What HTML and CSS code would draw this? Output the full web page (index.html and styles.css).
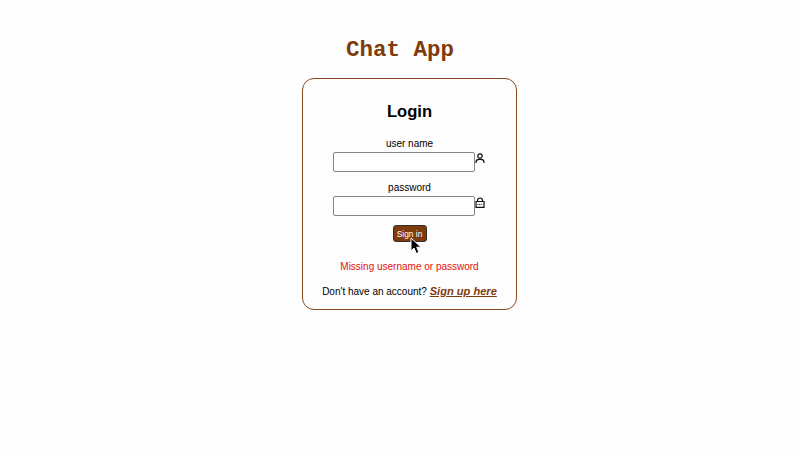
FILE: index.html
```html
<!DOCTYPE html>
<html lang="en">
<head>
<meta charset="utf-8">
<title>Chat App</title>
<link rel="stylesheet" href="styles.css">
</head>
<body>
<h1 class="brand">Chat App</h1>
<main class="card">
  <h2 class="title">Login</h2>
  <form class="form">
    <label class="label" for="user">user name</label>
    <div class="field">
      <input class="input" id="user" type="text">
      <svg class="icon" viewBox="0 0 12 12"><circle cx="6" cy="4" r="2.2"/><path d="M2 11V10.2Q2 7.6 4.8 7.3H7.2Q10 7.6 10 10.2V11"/></svg>
    </div>
    <label class="label" for="pass">password</label>
    <div class="field">
      <input class="input" id="pass" type="password">
      <svg class="icon" viewBox="0 0 12 12"><path d="M2 5.5H10V11.4H2ZM3.5 5.5V4.5Q3.5 2 6 2Q8.5 2 8.5 4.5V5.5"/><path class="dots" d="M3.5 8.4H8.5"/></svg>
    </div>
    <div class="action">
      <button class="button" type="button">Sign in</button>
      <svg class="cursor" viewBox="0 0 12 18"><path d="M1 1V14L4 11L6.4 16.5L9 15.3L6.7 10.2H11Z"/></svg>
    </div>
  </form>
  <p class="error">Missing username or password</p>
  <p class="signup">Don't have an account? <a class="link" href="#">Sign up here</a></p>
</main>
</body>
</html>
```

FILE: styles.css
```css
* { box-sizing: border-box; }
body { margin: 0; background: #fdfdfd; color: #000; font: 10px/12px "Liberation Sans", Arial, sans-serif; }
.brand { margin: 37px 0 0; text-align: center; color: #803b0c; font: bold 22.5px/26px "Liberation Mono", monospace; }
.card { width: 215px; height: 232px; margin: 15px 0 0 302px; border: 1px solid #8a461c; border-radius: 12px; text-align: center; }
.title { margin: 23px 0 16px; font-size: 16.6px; line-height: 20px; }
.form { display: flex; flex-direction: column; }
.label { height: 14px; line-height: 12px; }
.field { display: flex; margin: 0 0 10px 30px; }
.field:nth-of-type(2) { margin-bottom: 9px; }
.input { width: 142px; height: 20px; border: 1px solid #858585; border-radius: 2px; background: #fff; }
.icon { width: 12px; height: 12px; margin-left: -1px; fill: none; stroke: #111; stroke-width: 1.2; }
.dots { stroke-width: 1; stroke-dasharray: 1 .6; }
.action { position: relative; align-self: center; height: 18px; }
.button { display: block; width: 34px; height: 17px; padding: 0; border: 1px solid #303030; border-radius: 3px; background: #803b0c; color: #fff; font: 8.4px/14px "Liberation Sans", Arial, sans-serif; }
.cursor { position: absolute; left: 17px; top: 12px; width: 12px; height: 18px; fill: #000; stroke: #fff; }
.error { margin: 18px 0 12px; color: #e3120b; }
.signup { margin: 0; white-space: nowrap; }
.link { color: #803b0c; font-size: 11.1px; font-style: italic; font-weight: bold; }
```
